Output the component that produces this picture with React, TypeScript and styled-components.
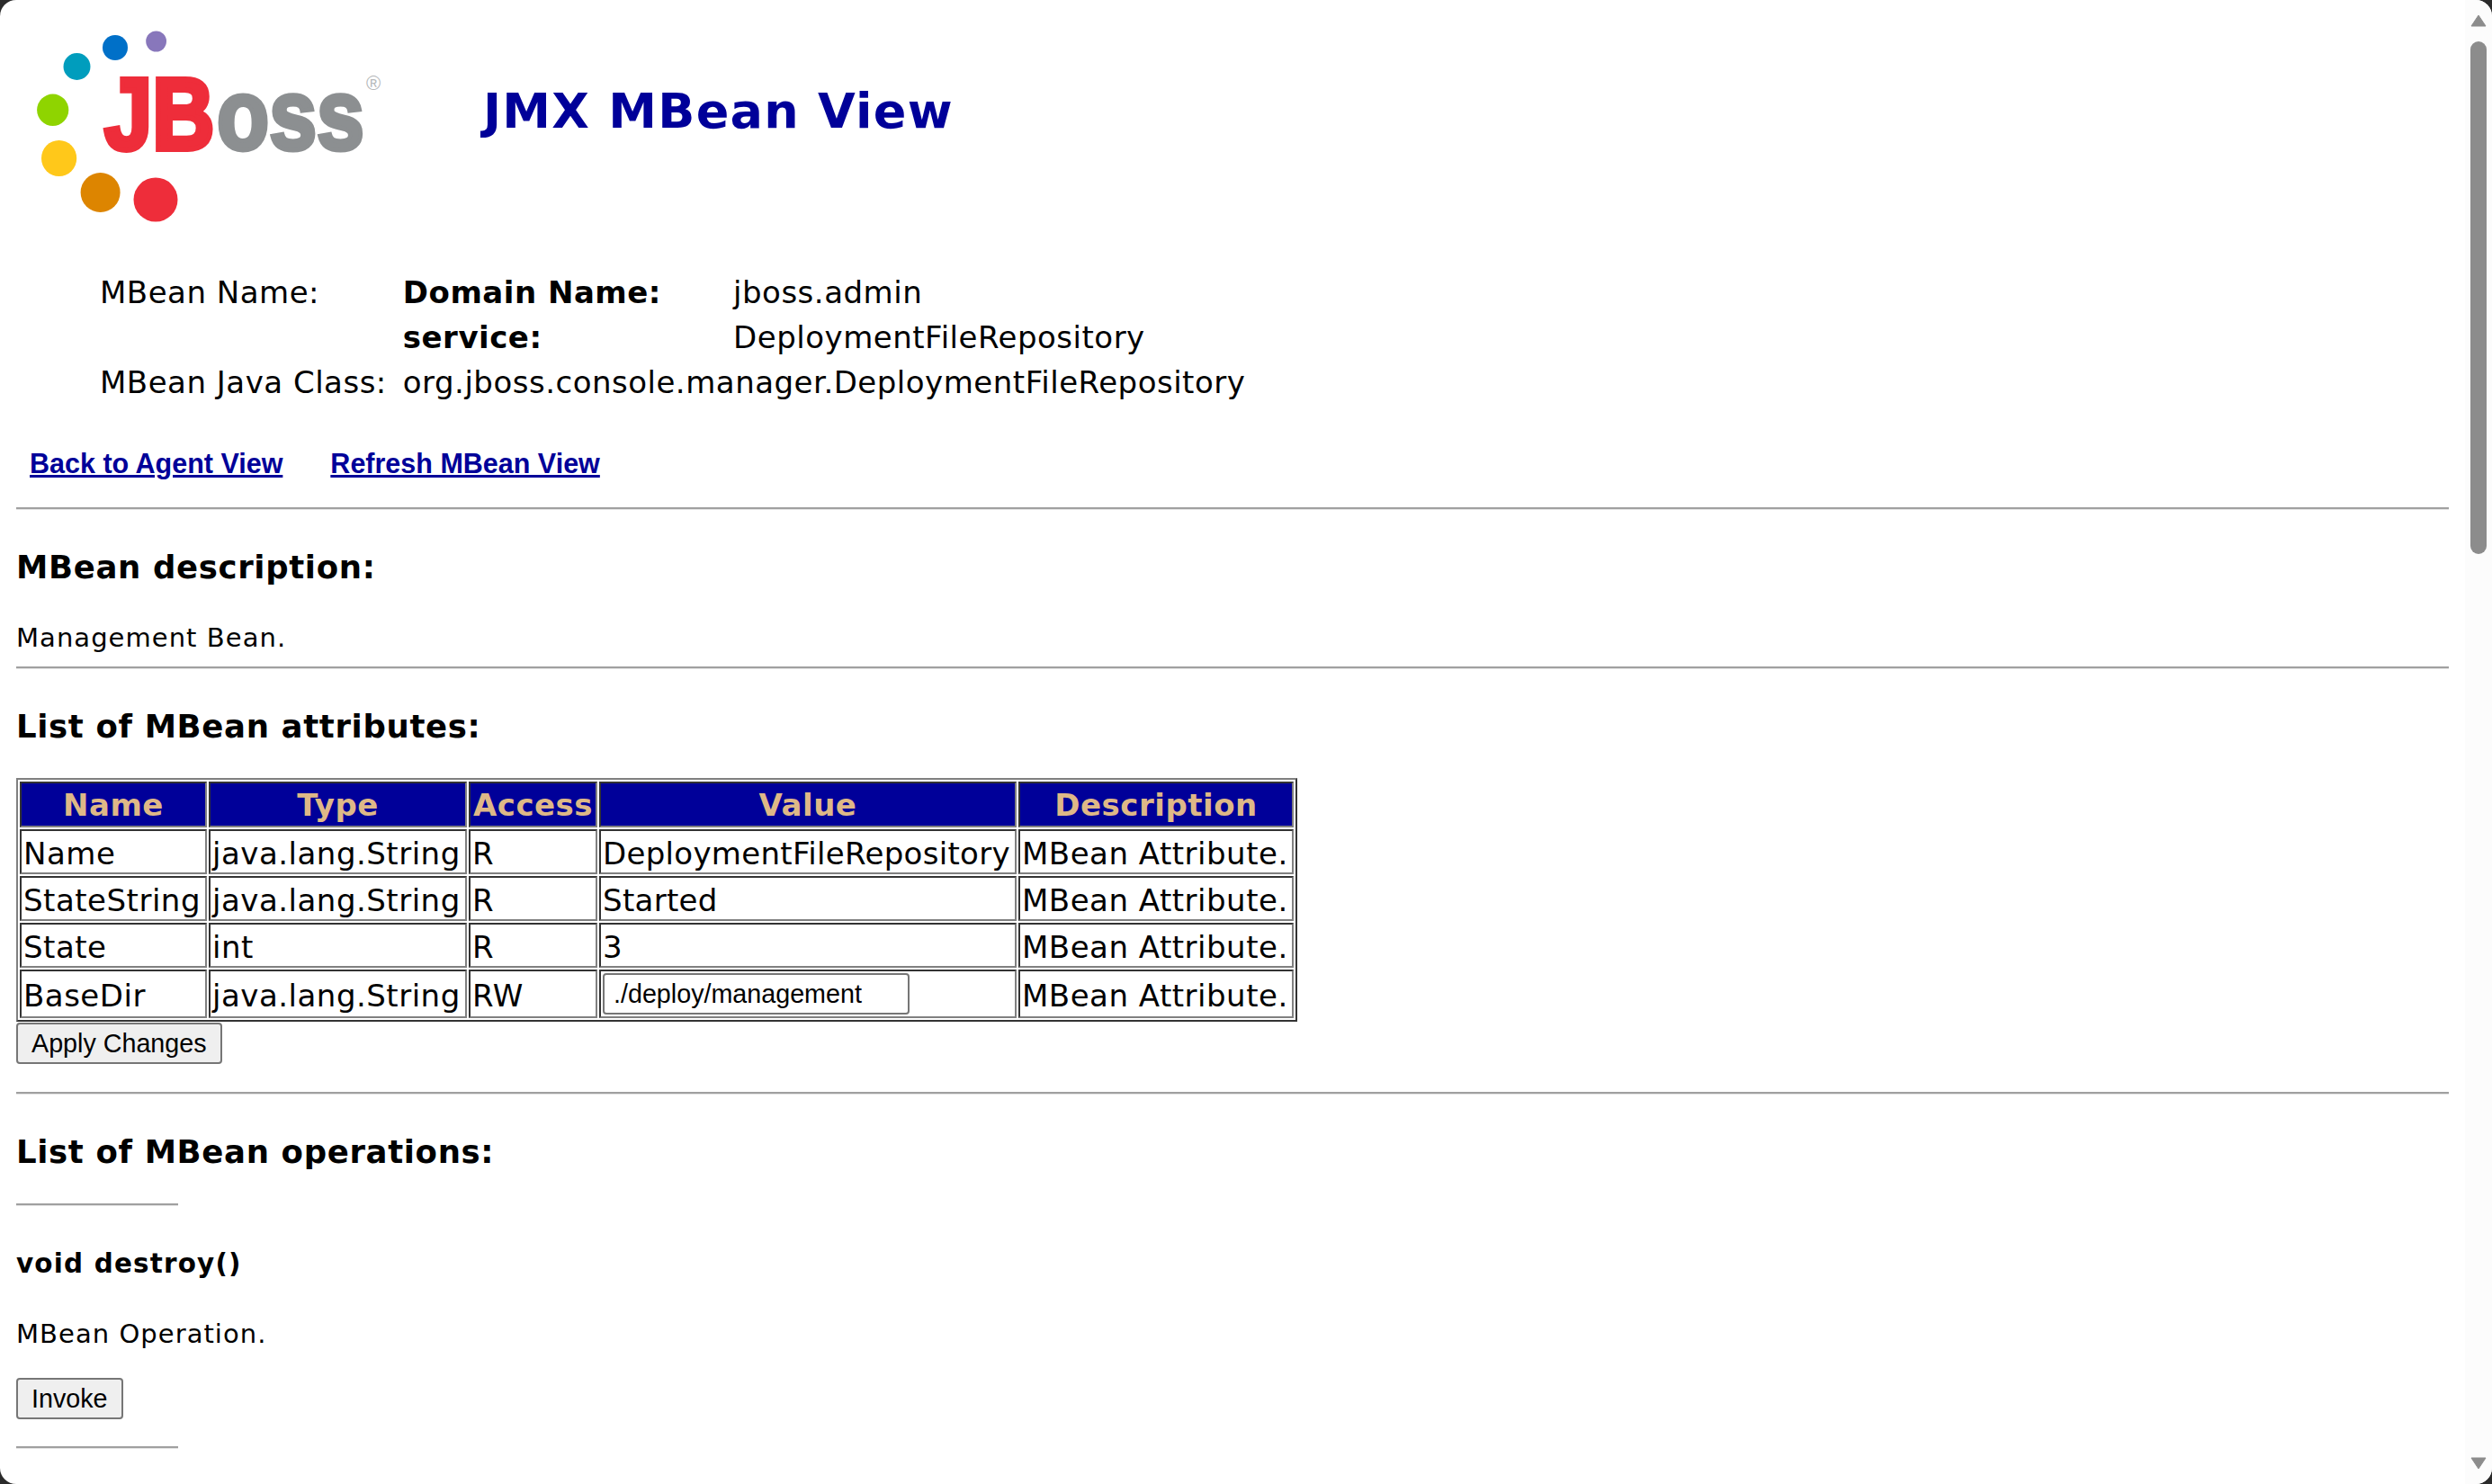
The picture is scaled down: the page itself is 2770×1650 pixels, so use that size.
import React from "react";
import styled, { createGlobalStyle } from "styled-components";

const attributes = [
  { name: "Name", type: "java.lang.String", access: "R", value: "DeploymentFileRepository" },
  { name: "StateString", type: "java.lang.String", access: "R", value: "Started" },
  { name: "State", type: "int", access: "R", value: "3" },
  { name: "BaseDir", type: "java.lang.String", access: "RW", value: null },
];

const Global = createGlobalStyle`
  html, body {
    margin: 0;
    padding: 0;
    height: 100%;
    overflow: hidden;
    background: #2b2b2b;
  }
`;

const Logo = () => (
  <svg width="440" height="270" viewBox="0 0 440 270">
    <ellipse cx="173.6" cy="46" rx="11.4" ry="11.5" fill="#8877bb" />
    <ellipse cx="128" cy="53" rx="14" ry="14" fill="#0070c8" />
    <ellipse cx="85.5" cy="74" rx="15" ry="15" fill="#009dbd" />
    <ellipse cx="58.7" cy="122.3" rx="17.6" ry="17.7" fill="#8fd400" />
    <ellipse cx="65.6" cy="176" rx="19.6" ry="20" fill="#ffc81a" />
    <ellipse cx="111.6" cy="214" rx="22" ry="22" fill="#dd8500" />
    <ellipse cx="173" cy="222" rx="24.5" ry="24.5" fill="#ee2d3a" />
    <text transform="translate(116 166) scale(0.84 1)" fontFamily="Liberation Sans" fontWeight="700" fontSize="114" fill="#ee2d3a" stroke="#ee2d3a" strokeWidth="6">JB</text>
    <text transform="translate(241 166) scale(0.85 1)" fontFamily="Liberation Sans" fontWeight="700" fontSize="112" fill="#8c8f91" stroke="#8c8f91" strokeWidth="5">oss</text>
    <text x="407" y="100" fontFamily="Liberation Sans" fontSize="22" fill="#b5b8ba">®</text>
  </svg>
);

export default function App() {
  return (
    <>
      <Global />
      <S.Window>
        <S.Page>
          <S.Header>
            <Logo />
            <S.Title>JMX MBean View</S.Title>
          </S.Header>

          <S.InfoTable>
            <tbody>
              <tr>
                <td>MBean Name:</td>
                <td><b>Domain Name:</b></td>
                <td>jboss.admin</td>
              </tr>
              <tr>
                <td></td>
                <td><b>service:</b></td>
                <td>DeploymentFileRepository</td>
              </tr>
              <tr>
                <td>MBean Java Class:</td>
                <td colSpan={2}>org.jboss.console.manager.DeploymentFileRepository</td>
              </tr>
            </tbody>
          </S.InfoTable>

          <S.Links>
            <a href="#agent">Back to Agent View</a>
            <a href="#refresh">Refresh MBean View</a>
          </S.Links>

          <S.Rule $top={31} />
          <S.Heading $top={42} $bottom={38}>MBean description:</S.Heading>
          <S.Text>Management Bean.</S.Text>
          <S.Rule $top={14} />
          <S.Heading $top={42} $bottom={35}>List of MBean attributes:</S.Heading>

          <S.AttrTable>
            <thead>
              <tr>
                <th>Name</th>
                <th>Type</th>
                <th>Access</th>
                <th>Value</th>
                <th>Description</th>
              </tr>
            </thead>
            <tbody>
              {attributes.map((attr) => (
                <tr key={attr.name}>
                  <td>{attr.name}</td>
                  <td>{attr.type}</td>
                  <td>{attr.access}</td>
                  <td>{attr.value ?? <S.Input defaultValue="./deploy/management" />}</td>
                  <td>MBean Attribute.</td>
                </tr>
              ))}
            </tbody>
          </S.AttrTable>
          <S.Button $top={1}>Apply Changes</S.Button>

          <S.Rule $top={31} />
          <S.Heading $top={42} $bottom={35}>List of MBean operations:</S.Heading>
          <S.ShortRule $top={0} />
          <S.OpName>void destroy()</S.OpName>
          <S.Text>MBean Operation.</S.Text>
          <S.Button $top={31}>Invoke</S.Button>
          <S.ShortRule $top={30} />
        </S.Page>

        <S.Scrollbar>
          <S.Arrow viewBox="0 0 18 14"><path d="M9 1 L17 13 H1 Z" fill="#8c8c8c" stroke="#8c8c8c" strokeLinejoin="round" /></S.Arrow>
          <S.Track><S.Thumb /></S.Track>
          <S.Arrow viewBox="0 0 18 14"><path d="M1 1 H17 L9 13 Z" fill="#8c8c8c" stroke="#8c8c8c" strokeLinejoin="round" /></S.Arrow>
        </S.Scrollbar>
      </S.Window>
    </>
  );
}

const S = {
  Window: styled.div`
    display: flex;
    height: 1650px;
    width: 2770px;
    overflow: hidden;
    background: #ffffff;
    border-radius: 18px;
    font-family: "DejaVu Sans", sans-serif;
    color: #000000;
  `,
  Page: styled.main`
    flex: 1;
    min-width: 0;
    padding: 0 18px;
  `,
  Header: styled.header`
    display: flex;
    align-items: flex-start;
    height: 299px;
    svg {
      flex: none;
      margin-left: -18px;
    }
  `,
  Title: styled.h1`
    margin: 92px 0 0 97px;
    font-size: 54px;
    letter-spacing: 1.25px;
    font-weight: 700;
    color: #000099;
  `,
  InfoTable: styled.table`
    margin: 0 0 0 89px;
    border-spacing: 2px;
    font-size: 34px;
    letter-spacing: 0.5px;
    td {
      padding: 3px 2px;
      line-height: 42px;
    }
    td:first-child {
      padding-right: 14px;
    }
    td:nth-child(2) {
      padding-right: 4px;
    }
  `,
  Links: styled.div`
    display: flex;
    gap: 53px;
    margin: 46px 0 0 15px;
    font-family: "Liberation Sans", sans-serif;
    font-size: 30.5px;
    line-height: 36px;
    font-weight: 700;
    a {
      color: #000099;
    }
  `,
  Rule: styled.hr<{ $top: number }>`
    height: 3px;
    margin: ${({ $top }) => $top}px 0 0;
    border: 0;
    background: linear-gradient(#a0a0a0 2px, #e4e4e4 2px);
  `,
  ShortRule: styled.hr<{ $top: number }>`
    width: 180px;
    height: 3px;
    margin: ${({ $top }) => $top}px 0 0;
    border: 0;
    background: linear-gradient(#a0a0a0 2px, #e4e4e4 2px);
  `,
  Heading: styled.h2<{ $top: number; $bottom: number }>`
    margin: ${({ $top }) => $top}px 0 ${({ $bottom }) => $bottom}px;
    font-size: 35.5px;
    line-height: 44px;
    letter-spacing: 0.65px;
    font-weight: 700;
  `,
  OpName: styled.h3`
    margin: 45px 0 41px;
    font-size: 29.4px;
    line-height: 38px;
    letter-spacing: 1.2px;
    font-weight: 700;
  `,
  Text: styled.p`
    margin: 0;
    font-size: 29px;
    line-height: 36px;
    letter-spacing: 1.05px;
  `,
  AttrTable: styled.table`
    width: 1424px;
    table-layout: fixed;
    border-spacing: 2px;
    border-style: solid;
    border-width: 2px;
    border-color: #808080 #333333 #333333 #808080;
    font-size: 34px;
    letter-spacing: 0.5px;
    th, td {
      box-sizing: border-box;
      line-height: 42px;
      white-space: nowrap;
      border-style: solid;
      border-width: 2px;
      border-color: #333333 #808080 #808080 #333333;
    }
    th {
      padding: 3px 2px 2px;
      background: #000099;
      color: #deb887;
    }
    td {
      padding: 4px 2px 0;
    }
    th:nth-child(1) { width: 208px; }
    th:nth-child(2) { width: 287px; }
    th:nth-child(3) { width: 143px; }
    th:nth-child(4) { width: 464px; }
    th:nth-child(5) { width: 306px; }
    td:nth-child(4) {
      letter-spacing: 0.3px;
    }
  `,
  Input: styled.input`
    display: block;
    width: 341px;
    height: 46px;
    margin: -2px 0 2px;
    box-sizing: border-box;
    padding: 0 10px;
    border: 2px solid #767676;
    border-radius: 4px;
    font-family: "Liberation Sans", sans-serif;
    font-size: 28.7px;
  `,
  Button: styled.button<{ $top: number }>`
    display: block;
    margin-top: ${({ $top }) => $top}px;
    padding: 0 15px;
    height: 46px;
    border: 2px solid #767676;
    border-radius: 4px;
    background: #efefef;
    font-family: "Liberation Sans", sans-serif;
    font-size: 28.7px;
    color: #000000;
  `,
  Scrollbar: styled.aside`
    flex: none;
    width: 30px;
    display: flex;
    flex-direction: column;
    align-items: center;
    background: #fcfcfc;
  `,
  Arrow: styled.svg`
    flex: none;
    width: 18px;
    height: 14px;
    margin: 16px 0;
  `,
  Track: styled.div`
    flex: 1;
    width: 100%;
    display: flex;
    justify-content: center;
  `,
  Thumb: styled.div`
    width: 18px;
    height: 570px;
    border-radius: 9px;
    background: #8c8c8c;
  `,
};
